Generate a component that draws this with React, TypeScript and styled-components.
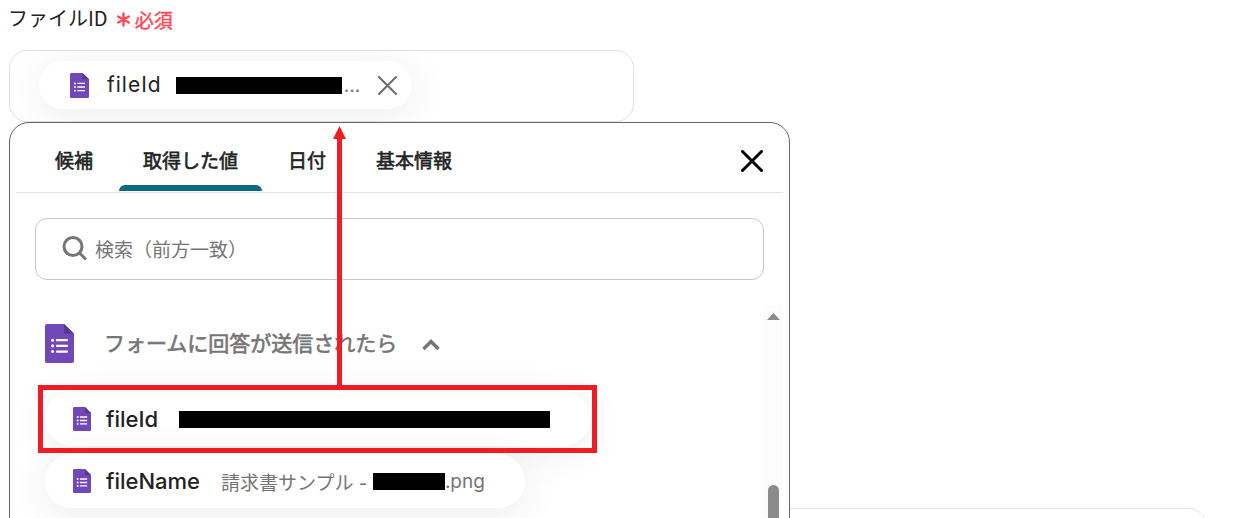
import React from "react";
import styled, { createGlobalStyle } from "styled-components";

const GlobalStyle = createGlobalStyle`
  *, *::before, *::after { box-sizing: border-box; }
  body {
    margin: 0;
    background: #fff;
    color: #222;
    font-family: Inter, "Noto Sans CJK JP", sans-serif;
  }
  button, input { font: inherit; color: inherit; }
  button { padding: 0; border: 0; background: none; cursor: pointer; }
`;

const Page = styled.main`
  height: 100vh;
  overflow: hidden;
  padding: 0 30px 0 8px;
`;

const FieldLabel = styled.div`
  display: flex;
  align-items: center;
  gap: 8px;
  height: 34px;
  font-family: "Noto Sans CJK JP", sans-serif;
  font-size: 20px;
`;

const Required = styled.span`
  display: flex;
  align-items: center;
  gap: 4px;
  padding-top: 4px;
  color: #ff4757;
  font-size: 19px;
  -webkit-text-stroke: 0.4px;
`;

const Field = styled.div`
  position: relative;
  max-width: 625px;
  height: 72px;
  margin: 16px 0 0 1px;
  border: 1px solid #dfdfe6;
  border-radius: 18px;
`;

const FieldClip = styled.div`
  height: 100%;
  overflow: hidden;
  border-radius: 17px;
  padding: 10px 29px;
`;

const Chip = styled.div`
  display: inline-flex;
  align-items: center;
  height: 48px;
  padding: 0 15px 0 31px;
  border-radius: 24px;
  background: #fff;
  box-shadow: 0 6px 40px rgba(0, 0, 0, 0.08);
`;

const ChipName = styled.span`
  margin: 0 14px 0 18px;
  padding-bottom: 2px;
  font-size: 21px;
  letter-spacing: 1px;
`;

const Redacted = styled.span<{ $width: number }>`
  flex: none;
  width: ${(p) => p.$width}px;
  height: 17px;
  background: #000;
`;

const Ellipsis = styled.span`
  margin: 0 18px 0 2px;
  color: #757575;
  font-size: 19px;
`;

const IconButton = styled.button`
  display: flex;
  svg { display: block; }
`;

const Panel = styled.section`
  position: absolute;
  top: 71px;
  left: -1px;
  z-index: 1;
  width: 781px;
  height: 640px;
  padding: 0 6px;
  border: 1px solid #666;
  border-radius: 20px;
  background: #fff;
`;

const PanelHead = styled.header`
  display: flex;
  justify-content: space-between;
  align-items: stretch;
  height: 70px;
  padding: 0 20px 0 15px;
  border-bottom: 1px solid #e3e3e3;
`;

const Tabs = styled.div`
  display: flex;
  gap: 2px;
`;

const Tab = styled.button<{ $active?: boolean }>`
  position: relative;
  padding: 8px 24px 0;
  font-size: 19px;
  line-height: 28px;
  -webkit-text-stroke: 0.6px;
  &::after {
    content: "";
    position: absolute;
    left: 0;
    right: 0;
    bottom: 1px;
    height: 6px;
    border-radius: 6px 6px 0 0;
    background: ${(p) => (p.$active ? "#0b6a82" : "transparent")};
  }
`;

const CloseButton = styled(IconButton)`
  align-items: center;
  padding-top: 6px;
`;

const SearchBox = styled.label`
  display: flex;
  align-items: center;
  gap: 7px;
  height: 62px;
  margin: 25px 19px 0;
  padding: 0 26px;
  border: 1px solid #c8c8c8;
  border-radius: 12px;
`;

const SearchInput = styled.input`
  flex: 1;
  min-width: 0;
  padding: 0 0 2px;
  border: 0;
  outline: 0;
  background: none;
  font-family: "Noto Sans CJK JP", sans-serif;
  font-size: 19px;
  &::placeholder { color: #757575; opacity: 1; }
`;

const Results = styled.div`
  display: flex;
  height: 380px;
  margin-top: 25px;
`;

const ResultList = styled.div`
  flex: 1;
  min-width: 0;
  padding: 19px 0 0 29px;
`;

const Scrollbar = styled.div`
  display: flex;
  flex-direction: column;
  align-items: center;
  width: 19px;
  padding-top: 8px;
  background: #fcfcfc;
`;

const ScrollThumb = styled.div`
  width: 11px;
  height: 120px;
  margin-top: 165px;
  border-radius: 6px;
  background: #8b8b8b;
`;

const GroupButton = styled.button`
  display: flex;
  align-items: center;
  color: #757575;
  font-size: 21px;
  -webkit-text-stroke: 0.6px;
`;

const GroupTitle = styled.span`
  margin: 0 25px 0 30px;
  padding-bottom: 4px;
`;

const Items = styled.ul`
  display: flex;
  flex-direction: column;
  align-items: flex-start;
  gap: 8px;
  margin: 29px 0 0;
  padding: 0;
  list-style: none;
`;

const Item = styled.li`
  position: relative;
`;

const Pill = styled.button`
  display: flex;
  align-items: center;
  height: 54px;
  padding: 0 40px 0 28px;
  border-radius: 27px;
  background: #fff;
  box-shadow: 0 6px 40px rgba(0, 0, 0, 0.08);
`;

const PillName = styled.span`
  margin: 0 21px 0 15px;
  font-size: 22px;
  font-weight: 500;
`;

const PillValue = styled.span`
  display: flex;
  align-items: center;
  color: #757575;
  font-size: 19px;
  white-space: pre;
`;

const Highlight = styled.div`
  position: absolute;
  inset: -7px;
  z-index: 1;
  border: 5px solid #ee1c25;
  pointer-events: none;
`;

const Arrow = styled.svg`
  position: absolute;
  left: 290px;
  bottom: 100%;
  display: block;
  margin-bottom: 5px;
`;

const NextCard = styled.section`
  height: 200px;
  margin: 386px 0 0 1px;
  border: 1px solid #e3e3e6;
  border-radius: 20px;
`;

function FormIcon({ width, height }: { width: number; height: number }) {
  return (
    <svg width={width} height={height} viewBox="0 0 28 38" preserveAspectRatio="none" aria-hidden="true">
      <path d="M2 0H18.5L28 9.500V36a2 2 0 0 1-2 2H2a2 2 0 0 1-2-2V2a2 2 0 0 1 2-2z" fill="#7248b9" />
      <path d="M18.500 0L28 9.500H18.500z" fill="#563789" />
      <g fill="#fff">
        <circle cx="7.300" cy="15.800" r="1.500" />
        <circle cx="7.300" cy="21.300" r="1.500" />
        <circle cx="7.300" cy="26.800" r="1.500" />
        <path d="M10.800 14.700h11.200v2.200H10.800zM10.800 20.200h11.200v2.200H10.800zM10.800 25.700h11.200v2.200H10.800z" />
      </g>
    </svg>
  );
}

function CrossIcon({ size, weight, color }: { size: number; weight: number; color: string }) {
  const far = size - weight / 2;
  const near = weight / 2;
  return (
    <svg width={size} height={size} fill="none" stroke={color} strokeWidth={weight} strokeLinecap="round" aria-hidden="true">
      <path d={`M${near} ${near}L${far} ${far}M${far} ${near}L${near} ${far}`} />
    </svg>
  );
}

const tabs = ["候補", "取得した値", "日付", "基本情報"];

export default function App() {
  return (
    <>
      <GlobalStyle />
      <Page>
        <FieldLabel>
          <span>ファイルID</span>
          <Required>
            <svg width="15" height="16" stroke="#ff4757" strokeWidth="2.400" strokeLinecap="round" aria-hidden="true">
              <path d="M7.500 2.500V14.500M2.200 5.500L12.800 11.500M12.800 5.500L2.200 11.500" />
            </svg>
            必須
          </Required>
        </FieldLabel>
        <Field>
          <FieldClip>
            <Chip>
              <FormIcon width={19} height={25} />
              <ChipName>fileId</ChipName>
              <Redacted $width={166} />
              <Ellipsis>...</Ellipsis>
              <IconButton type="button" aria-label="削除">
                <CrossIcon size={19} weight={2} color="#6b6b6b" />
              </IconButton>
            </Chip>
          </FieldClip>
          <Panel>
            <PanelHead>
              <Tabs role="tablist">
                {tabs.map((name, i) => (
                  <Tab key={name} type="button" role="tab" aria-selected={i === 1} $active={i === 1}>
                    {name}
                  </Tab>
                ))}
              </Tabs>
              <CloseButton type="button" aria-label="閉じる">
                <CrossIcon size={22} weight={3} color="#000" />
              </CloseButton>
            </PanelHead>
            <SearchBox>
              <svg width="26" height="26" fill="none" stroke="#757575" strokeWidth="3" aria-hidden="true">
                <circle cx="11" cy="10.500" r="9" />
                <path d="M17.500 17L24 23.500" />
              </svg>
              <SearchInput type="search" aria-label="検索" placeholder="検索（前方一致）" />
            </SearchBox>
            <Results>
              <ResultList>
                <GroupButton type="button" aria-expanded="true">
                  <FormIcon width={29} height={39} />
                  <GroupTitle>フォームに回答が送信されたら</GroupTitle>
                  <svg width="18" height="12" fill="none" stroke="#757575" strokeWidth="3.500" aria-hidden="true">
                    <path d="M1.500 11L9 3.500L16.500 11" />
                  </svg>
                </GroupButton>
                <Items>
                  <Item>
                    <Pill type="button">
                      <FormIcon width={18} height={24} />
                      <PillName>fileId</PillName>
                      <Redacted $width={371} />
                    </Pill>
                    <Highlight>
                      <Arrow width="13" height="259" fill="#ee1c25" aria-hidden="true">
                        <path d="M6.500 0L13 13H9V259H4V13H0z" />
                      </Arrow>
                    </Highlight>
                  </Item>
                  <Item>
                    <Pill type="button">
                      <FormIcon width={18} height={24} />
                      <PillName>fileName</PillName>
                      <PillValue>
                        請求書サンプル - <Redacted $width={72} />.png
                      </PillValue>
                    </Pill>
                  </Item>
                </Items>
              </ResultList>
              <Scrollbar>
                <svg width="13" height="7" fill="#8b8b8b" aria-hidden="true">
                  <path d="M0 7L6.500 0L13 7z" />
                </svg>
                <ScrollThumb />
              </Scrollbar>
            </Results>
          </Panel>
        </Field>
        <NextCard />
      </Page>
    </>
  );
}
